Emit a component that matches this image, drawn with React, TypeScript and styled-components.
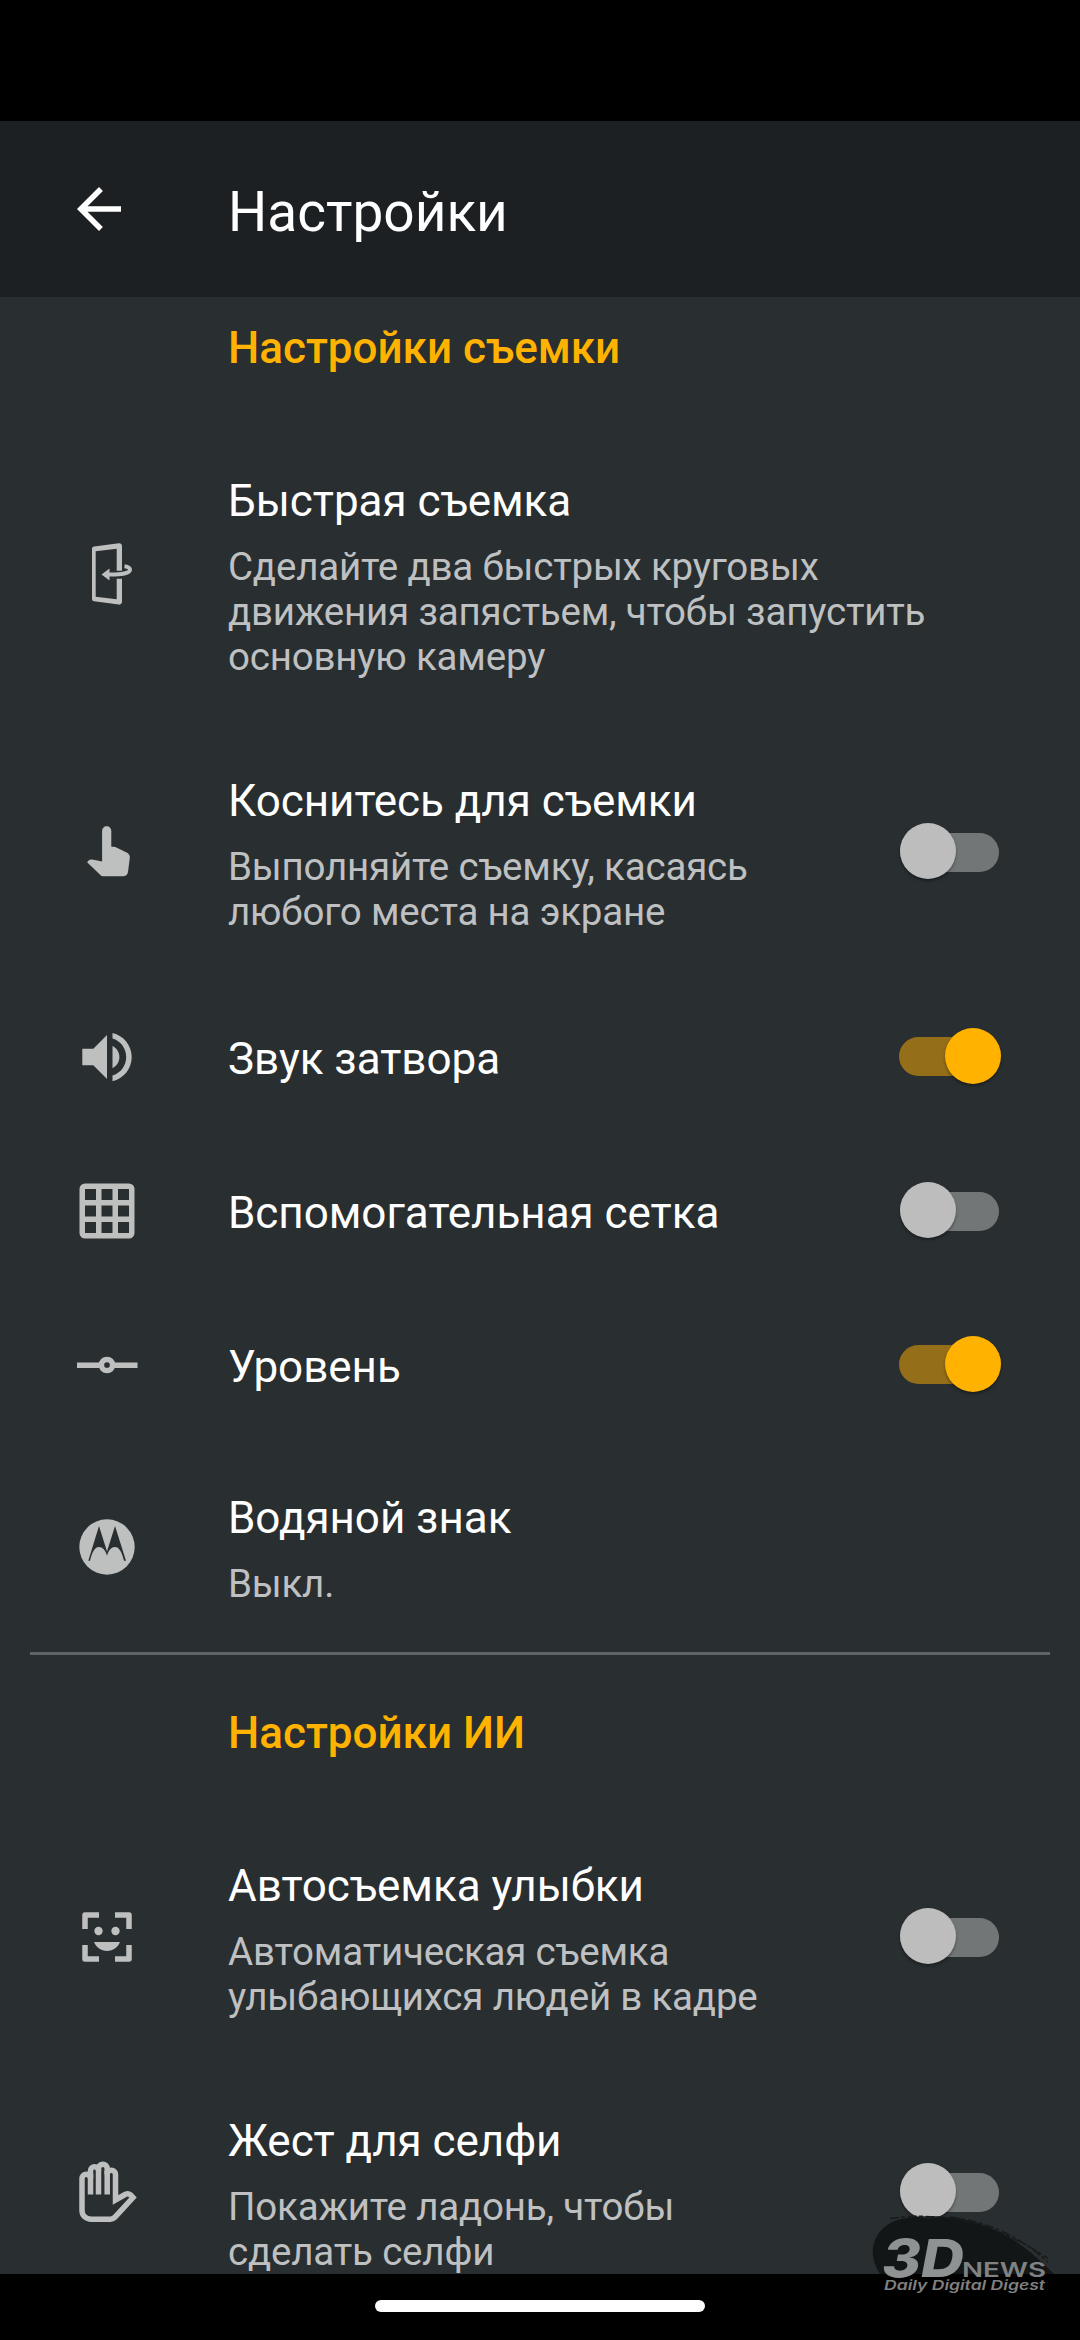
import React from "react";
import styled, { createGlobalStyle } from "styled-components";

const GlobalStyle = createGlobalStyle`
  html, body { margin: 0; padding: 0; background: #000; }
  *, *::before, *::after { box-sizing: border-box; }
`;

const Screen = styled.main`
  position: relative;
  display: flex;
  flex-direction: column;
  width: 1080px;
  height: 2340px;
  overflow: hidden;
  background: #000;
  color: #fff;
  font-family: Roboto, "Noto Sans", sans-serif;
`;

const StatusBar = styled.div`
  flex: none;
  height: 121px;
`;

const Toolbar = styled.header`
  flex: none;
  display: flex;
  align-items: center;
  height: 176px;
  padding-left: 66px;
  background: #1c2022;
`;

const BackButton = styled.button`
  display: flex;
  width: 66px;
  height: 66px;
  margin-right: 96px;
  padding: 0;
  border: 0;
  background: none;
  color: #fff;
`;

const ToolbarTitle = styled.h1`
  margin: 5px 0 0;
  font-size: 55px;
  line-height: 64px;
  font-weight: 400;
`;

const List = styled.div`
  flex: none;
  height: 1977px;
  overflow: hidden;
  background: #292e30;
`;

const SectionTitle = styled.h2`
  height: 128px;
  margin: 0;
  padding: 25px 0 0 228px;
  font-size: 44px;
  line-height: 52px;
  font-weight: 500;
  color: #ffb300;
`;

const Divider = styled.hr`
  height: 3px;
  margin: 0 30px 27px;
  border: 0;
  background: #5f6466;
`;

const Row = styled.div<{ $single?: boolean }>`
  display: flex;
  align-items: center;
  height: ${(p) => (p.$single ? "154px" : "auto")};
`;

const IconSlot = styled.div`
  flex: none;
  display: flex;
  width: 228px;
  padding: 0 0 1px 74px;
  color: #bebfbf;
`;

const Copy = styled.div<{ $single?: boolean }>`
  flex: 1;
  padding: ${(p) => (p.$single ? "4px 0 0" : "50px 0 46px")};
`;

const ItemTitle = styled.div`
  font-size: 44px;
  line-height: 52px;
  letter-spacing: -0.04px;
  white-space: nowrap;
`;

const Summary = styled.div`
  margin-top: 17px;
  font-size: 38.5px;
  line-height: 45px;
  letter-spacing: -0.19px;
  color: #bfc0c1;
  white-space: pre-line;
`;

const Track = styled.div<{ $on?: boolean }>`
  flex: none;
  display: flex;
  align-items: center;
  justify-content: ${(p) => (p.$on ? "flex-end" : "flex-start")};
  width: ${(p) => (p.$on ? 100 : 99)}px;
  height: 39px;
  margin: 0 81px ${(p) => (p.$on ? 1 : 0)}px 0;
  border-radius: 20px;
  background: ${(p) => (p.$on ? "#946e18" : "#727677")};
`;

const Thumb = styled.span<{ $on?: boolean }>`
  flex: none;
  width: 56px;
  height: 56px;
  margin: 0 ${(p) => (p.$on ? -2 : 0)}px ${(p) => (p.$on ? 1 : 3)}px 0;
  border-radius: 50%;
  background: ${(p) => (p.$on ? "#ffb300" : "#bdbdbd")};
  box-shadow: 0 2px 3px rgba(0, 0, 0, 0.35);
`;

const NavBar = styled.footer`
  flex: none;
  display: flex;
  justify-content: center;
  height: 66px;
  padding-top: 26px;
`;

const HomeHandle = styled.div`
  width: 330px;
  height: 12px;
  border-radius: 6px;
  background: #fff;
`;

const Watermark = styled.svg`
  position: absolute;
  left: 850px;
  top: 2200px;
`;

const Glyph = ({ children }: { children: React.ReactNode }) => (
  <svg width="66" height="66" viewBox="0 0 66 66" fill="currentColor" overflow="visible">
    {children}
  </svg>
);

const QuickIcon = () => (
  <Glyph>
    <path d="M48 28.700V4.300c0-2-1.300-3.300-3.300-3L20.200 4.400C18.700 4.600 18 5.300 18 6.800v50c0 1.500.7 2.200 2.200 2.400l24.500 3.400c2 .3 3.300-1 3.300-3V36.700h-5.300v20.600L21.700 54.700V9.300l21-2.600v22z" />
    <path
      d="M50.500 24.300c3.500.5 5.500 1.700 5.500 3.500 0 3.200-8 5-22 4.700"
      fill="none"
      stroke="currentColor"
      strokeWidth="4"
    />
    <path d="M27.500 32.500l8-6v12z" />
  </Glyph>
);

const TapIcon = () => (
  <Glyph>
    <path
      transform="translate(-3.200 -1.200)"
      d="M31.300 30V13.300c0-2.700 2-4.800 4.600-4.800s4.600 2.100 4.600 4.800V29h2.500c1 0 1.800.2 2.600.6l10.700 5.300c2 1 3 3 2.700 5.200l-1.800 14c-.3 2.700-2.400 4.400-5 4.400H33c-1.500 0-2.700-.6-3.700-1.600L16.300 44.500l1.500-1.700c1-1 2.200-1.300 3.600-1l9.900 1.900z"
    />
  </Glyph>
);

const SoundIcon = () => (
  <Glyph>
    <path d="M8.300 24.800v16.500h11L33 55V11L19.300 24.800zM38.500 22v22.200c4.100-2 6.900-6.200 6.900-11.100S42.600 24 38.500 22zM38.500 8.900v5.700c8 2.400 13.700 9.700 13.700 18.500S46.500 49.200 38.500 51.600v5.700C49.500 54.800 57.700 45 57.700 33.100S49.500 11.400 38.500 8.900z" />
  </Glyph>
);

const GridIcon = () => (
  <Glyph>
    <path
      fillRule="evenodd"
      d="M11 5.500h44a5.500 5.500 0 0 1 5.500 5.500v44a5.500 5.500 0 0 1-5.500 5.500H11A5.500 5.500 0 0 1 5.500 55V11A5.500 5.500 0 0 1 11 5.500zM11 11v11h11V11zm16.500 0v11h11V11zM44 11v11h11V11zM11 27.500v11h11v-11zm16.500 0v11h11v-11zm16.500 0v11h11v-11zM11 44v11h11V44zm16.500 0v11h11V44zM44 44v11h11V44z"
    />
  </Glyph>
);

const LevelIcon = () => (
  <Glyph>
    <path d="M3 30.500h22.500v5.500H3zM40.500 30.500h23v5.500h-23z" />
    <circle cx="33" cy="33" r="5.600" fill="none" stroke="currentColor" strokeWidth="5.500" />
  </Glyph>
);

const MotoIcon = () => (
  <Glyph>
    <circle cx="33" cy="33" r="27.700" />
    <path
      fill="#292e30"
      d="M14.300 46.700L25 12l8 25.500L41 12l11 34.700h-2C47.700 37.500 45 33 41 33c-3.500 0-6.500 3.200-8 8.700C31.500 36.200 28.500 33 25 33c-4 0-6.700 4.500-9 13.700z"
    />
  </Glyph>
);

const SmileIcon = () => (
  <Glyph>
    <path
      d="M11 25V11h14M41 11h14v14M55 41v14H41M25 55H11V41"
      fill="none"
      stroke="currentColor"
      strokeWidth="5.500"
      strokeLinejoin="round"
    />
    <circle cx="24.500" cy="27" r="4.200" />
    <circle cx="41.500" cy="27" r="4.200" />
    <path d="M20 38h26c-2.300 5.500-7 9-13 9s-10.700-3.500-13-9z" />
  </Glyph>
);

const PalmIcon = () => (
  <Glyph>
    <g fill="none" stroke="currentColor" strokeWidth="5.500">
      <path d="M8 51V19.500a4.250 4.250 0 0 1 8.500 0V11.700a4 4 0 0 1 8 0V9.500a4.350 4.350 0 0 1 8.700 0V15.400a4.150 4.150 0 0 1 8.300 0V41L51.500 35.300c1.800-.9 3.500-.7 5 .5L59 38.500 41 58.200c-1.300 1.400-2.700 2-4.500 2H17.500C11.800 60.200 8 57 8 51z" />
      <path d="M16.500 15v20.500M24.500 10v25.500M33.200 12v23.500" />
    </g>
  </Glyph>
);

const Switch = ({ on }: { on?: boolean }) => (
  <Track $on={on} role="switch" aria-checked={!!on}>
    <Thumb $on={on} />
  </Track>
);

interface ItemProps {
  icon: React.ReactNode;
  title: string;
  summary?: string;
  toggle?: "on" | "off";
}

const Item = ({ icon, title, summary, toggle }: ItemProps) => (
  <Row $single={!summary}>
    <IconSlot>{icon}</IconSlot>
    <Copy $single={!summary}>
      <ItemTitle>{title}</ItemTitle>
      {summary && <Summary>{summary}</Summary>}
    </Copy>
    {toggle && <Switch on={toggle === "on"} />}
  </Row>
);

export default function App() {
  return (
    <Screen>
      <GlobalStyle />
      <StatusBar />
      <Toolbar>
        <BackButton aria-label="Назад">
          <svg width="66" height="66" viewBox="0 0 24 24" fill="currentColor">
            <path d="M20 11H7.830l5.590-5.590L12 4l-8 8 8 8 1.410-1.410L7.830 13H20v-2z" />
          </svg>
        </BackButton>
        <ToolbarTitle>Настройки</ToolbarTitle>
      </Toolbar>
      <List>
        <SectionTitle>Настройки съемки</SectionTitle>
        <Item
          icon={<QuickIcon />}
          title="Быстрая съемка"
          summary={"Сделайте два быстрых круговых\nдвижения запястьем, чтобы запустить\nосновную камеру"}
        />
        <Item
          icon={<TapIcon />}
          title="Коснитесь для съемки"
          summary={"Выполняйте съемку, касаясь\nлюбого места на экране"}
          toggle="off"
        />
        <Item icon={<SoundIcon />} title="Звук затвора" toggle="on" />
        <Item icon={<GridIcon />} title="Вспомогательная сетка" toggle="off" />
        <Item icon={<LevelIcon />} title="Уровень" toggle="on" />
        <Item icon={<MotoIcon />} title="Водяной знак" summary="Выкл." />
        <Divider />
        <SectionTitle>Настройки ИИ</SectionTitle>
        <Item
          icon={<SmileIcon />}
          title="Автосъемка улыбки"
          summary={"Автоматическая съемка\nулыбающихся людей в кадре"}
          toggle="off"
        />
        <Item
          icon={<PalmIcon />}
          title="Жест для селфи"
          summary={"Покажите ладонь, чтобы\nсделать селфи"}
          toggle="off"
        />
      </List>
      <NavBar>
        <HomeHandle />
      </NavBar>
      <Watermark width="230" height="140" viewBox="0 0 230 140">
        <path
          d="M30 74C18 56 20 34 42 22c18-8 60-8 88 2 32 10 54 30 74 50z"
          fill="#101415"
          opacity=".93"
        />
        <path
          d="M40 18.500c40-6 96-2 158 40M100 17c40 5 70 20 98 45"
          fill="none"
          stroke="#171b1c"
          strokeWidth="1.500"
          strokeDasharray="9 2 4 3"
        />
        <g fontFamily='Inter, "Liberation Sans", sans-serif'>
          <text
            x="32"
            y="76.500"
            fontSize="52.500"
            fontWeight="800"
            fontStyle="italic"
            textLength="82"
            lengthAdjust="spacingAndGlyphs"
            fill="#8f9293"
          >
            3D
          </text>
          <text
            x="112"
            y="76.500"
            fontSize="20.500"
            fontWeight="600"
            textLength="84"
            lengthAdjust="spacingAndGlyphs"
            fill="#808283"
          >
            NEWS
          </text>
          <text
            x="34"
            y="90"
            fontSize="13.500"
            fontWeight="600"
            fontStyle="italic"
            textLength="161"
            lengthAdjust="spacingAndGlyphs"
            fill="#808080"
          >
            Daily Digital Digest
          </text>
        </g>
      </Watermark>
    </Screen>
  );
}
